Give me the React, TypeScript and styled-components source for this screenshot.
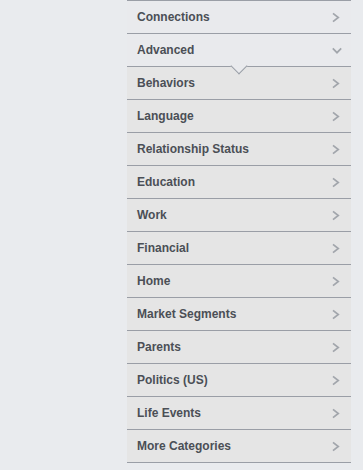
import React from "react";
import styled, { createGlobalStyle } from "styled-components";

const GlobalStyle = createGlobalStyle`
  html, body {
    margin: 0;
    padding: 0;
    background: #e9ebee;
  }
`;

type Item = { label: string; open?: boolean; sub?: boolean };

const items: Item[] = [
  { label: "Connections" },
  { label: "Advanced", open: true },
  { label: "Behaviors", sub: true },
  { label: "Language", sub: true },
  { label: "Relationship Status", sub: true },
  { label: "Education", sub: true },
  { label: "Work", sub: true },
  { label: "Financial", sub: true },
  { label: "Home", sub: true },
  { label: "Market Segments", sub: true },
  { label: "Parents", sub: true },
  { label: "Politics (US)", sub: true },
  { label: "Life Events", sub: true },
  { label: "More Categories", sub: true },
];

const Chevron: React.FC<{ down?: boolean }> = ({ down }) => (
  <Icon width="16" height="16" viewBox="0 0 16 16">
    {down ? (
      <polyline points="5.8,6.3 10,10.7 14.2,6.3" />
    ) : (
      <polyline points="6,4.3 11.3,8.5 6,12.7" />
    )}
  </Icon>
);

const App: React.FC = () => {
  return (
    <>
      <GlobalStyle />
      <Panel>
        {items.map((item) => (
          <Row key={item.label} sub={item.sub}>
            <Label>{item.label}</Label>
            <Chevron down={item.open} />
            {item.open && <Caret />}
          </Row>
        ))}
      </Panel>
    </>
  );
};

export default App;

const Panel = styled.div`
  margin-left: 127px;
  width: 224px;
  border-top: 1px solid #9a9ea6;
  font-family: "Liberation Sans", Arial, sans-serif;
`;

const Row = styled.div<{ sub?: boolean }>`
  position: relative;
  display: flex;
  align-items: center;
  justify-content: space-between;
  height: 32px;
  padding: 0 8px 0 10px;
  background: ${(p) => (p.sub ? "#e5e5e5" : "#e9eaed")};
  border-bottom: 1px solid #9a9ea6;
`;

const Label = styled.span`
  font-size: 12px;
  font-weight: bold;
  color: #4b4f56;
`;

const Icon = styled.svg`
  fill: none;
  stroke: #a2a6ac;
  stroke-width: 1.7;
`;

const Caret = styled.span`
  position: absolute;
  left: 106px;
  top: 26px;
  width: 12px;
  height: 12px;
  background: #e9eaed;
  border-right: 1px solid #9a9ea6;
  border-bottom: 1px solid #9a9ea6;
  transform: rotate(45deg);
  box-sizing: border-box;
  z-index: 1;
`;
